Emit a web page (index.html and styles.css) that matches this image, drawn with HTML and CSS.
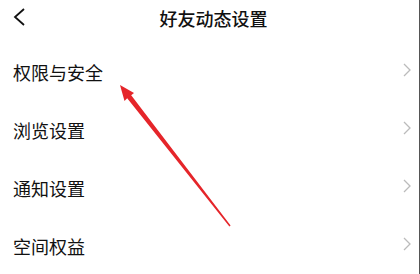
FILE: index.html
```html
<!DOCTYPE html>
<html lang="zh-CN">
<head>
  <meta charset="UTF-8">
  <title>好友动态设置</title>
  <link rel="stylesheet" href="styles.css">
</head>
<body>
<div class="screen">
  <div class="header">
    <svg class="back" width="14" height="20" viewBox="0 0 14 20"><polyline points="11,1 2,9 11,17" fill="none" stroke="#111" stroke-width="1.8"/></svg>
    <div class="title">好友动态设置</div>
  </div>
  <div class="list">
    <div class="row"><span>权限与安全</span><svg class="more" width="8" height="14" viewBox="0 0 8 14"><polyline points="1,1 7,7 1,13" fill="none" stroke="#bbb" stroke-width="1.3"/></svg></div>
    <div class="row"><span>浏览设置</span><svg class="more" width="8" height="14" viewBox="0 0 8 14"><polyline points="1,1 7,7 1,13" fill="none" stroke="#bbb" stroke-width="1.3"/></svg></div>
    <div class="row"><span>通知设置</span><svg class="more" width="8" height="14" viewBox="0 0 8 14"><polyline points="1,1 7,7 1,13" fill="none" stroke="#bbb" stroke-width="1.3"/></svg></div>
    <div class="row"><span>空间权益</span><svg class="more" width="8" height="14" viewBox="0 0 8 14"><polyline points="1,1 7,7 1,13" fill="none" stroke="#bbb" stroke-width="1.3"/></svg></div>
  </div>
  <svg class="arrow" width="420" height="274" viewBox="0 0 420 274">
    <polygon points="120,85 134,93 131.2,95.3 230.6,225.5 229.4,226.5 127.2,98.3 124.5,101" fill="#e5252a"/>
  </svg>
</div>
</body>
</html>
```

FILE: styles.css
```css
body {
  margin: 0;
  background: white;
  font-family: "Noto Sans CJK SC", "Noto Sans", sans-serif;
  color: #111;
}
.screen {
  position: relative;
  width: 419px;
  height: 274px;
  border-right: 1px solid #555;
  overflow: hidden;
}
.header {
  position: relative;
  height: 36px;
  display: flex;
  align-items: center;
  justify-content: center;
}
.back {
  position: absolute;
  left: 13px;
  top: 8px;
}
.title {
  font-size: 18px;
  font-weight: 500;
  margin-left: 8px;
}
.list {
  margin-top: 7px;
}
.row {
  height: 58px;
  display: flex;
  align-items: center;
  justify-content: space-between;
  padding: 0 8px 0 13px;
  font-size: 18px;
}
.more {
  margin-top: -4px;
}
.arrow {
  position: absolute;
  left: 0;
  top: 0;
}
```
